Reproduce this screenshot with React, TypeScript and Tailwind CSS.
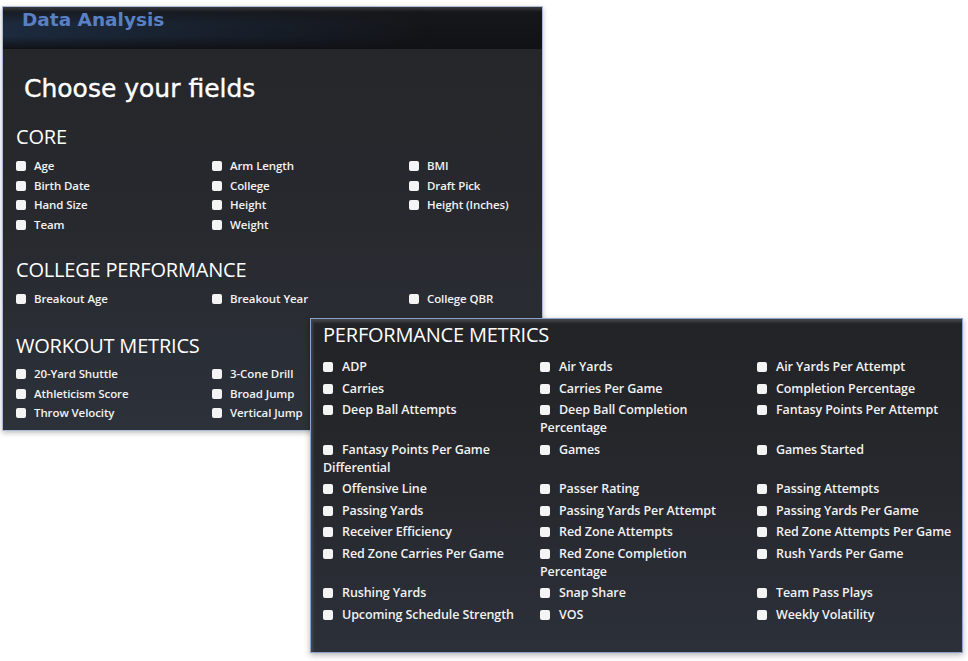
import React from "react";

const core = [
  "Age", "Arm Length", "BMI",
  "Birth Date", "College", "Draft Pick",
  "Hand Size", "Height", "Height (Inches)",
  "Team", "Weight",
];

const college = ["Breakout Age", "Breakout Year", "College QBR"];

// third column sits under the performance window, so it is left empty
const workout = [
  "20-Yard Shuttle", "3-Cone Drill", "",
  "Athleticism Score", "Broad Jump", "",
  "Throw Velocity", "Vertical Jump", "",
];

const performance = [
  "ADP", "Air Yards", "Air Yards Per Attempt",
  "Carries", "Carries Per Game", "Completion Percentage",
  "Deep Ball Attempts", "Deep Ball Completion Percentage", "Fantasy Points Per Attempt",
  "Fantasy Points Per Game Differential", "Games", "Games Started",
  "Offensive Line", "Passer Rating", "Passing Attempts",
  "Passing Yards", "Passing Yards Per Attempt", "Passing Yards Per Game",
  "Receiver Efficiency", "Red Zone Attempts", "Red Zone Attempts Per Game",
  "Red Zone Carries Per Game", "Red Zone Completion Percentage", "Rush Yards Per Game",
  "Rushing Yards", "Snap Share", "Team Pass Plays",
  "Upcoming Schedule Strength", "VOS", "Weekly Volatility",
];

const Box = ({ gap }: { gap: string }) => (
  <input
    type="checkbox"
    className={`appearance-none inline-block w-[10px] h-[10px] bg-[#f4f4f4] rounded-[2px] align-[-1px] ${gap}`}
  />
);

const SmallField = ({ label }: { label: string }) =>
  label ? (
    <label className="block text-[11.5px] leading-[17px] font-semibold text-[#f2f2f2] pr-[8px] tracking-[-0.1px]">
      <Box gap="mr-[8px]" />
      {label}
    </label>
  ) : (
    <div />
  );

const BigField = ({ label }: { label: string }) => (
  <label className="block text-[12.5px] leading-[18px] font-semibold text-[#f2f2f2] pr-[8px] tracking-[-0.1px]">
    <Box gap="mr-[9px]" />
    {label}
  </label>
);

const Heading = ({ children }: { children: React.ReactNode }) => (
  <h2 className="text-[20px] leading-[28px] text-white tracking-[-0.2px]">{children}</h2>
);

export default function App() {
  return (
    <div className="relative w-[968px] h-[661px] bg-white overflow-hidden font-['Open_Sans',sans-serif]">
      {/* back window */}
      <div className="absolute left-[2px] top-[6px] w-[541px] h-[425px] border border-[#a9bcd8] shadow-[0_2px_5px_rgba(0,0,0,0.25)] flex flex-col bg-gradient-to-b from-[#25262a] via-[#27292e] to-[#2c313a]">
        <div className="h-[42px] shrink-0 bg-[linear-gradient(180deg,#3a3b3e_0px,#16171a_5px,#111216_100%)] relative">
          <div className="absolute inset-0 bg-[linear-gradient(90deg,rgba(40,70,110,0.45),rgba(40,70,110,0.15)_55%,rgba(0,0,0,0)_80%)] [mask-image:linear-gradient(180deg,transparent_0%,black_40%,black_70%,transparent_100%)]" />
          <div className="relative pl-[19px] pt-[0px] text-[18.5px] leading-[26px] font-bold text-[#5a80c4] font-['DejaVu_Sans',sans-serif]">
            Data Analysis
          </div>
        </div>
        <div className="pl-[13px]">
          <h1 className="pl-[8px] pt-[25px] text-[25px] leading-[30px] text-white font-['DejaVu_Sans',sans-serif] [-webkit-text-stroke:0.4px_white]">
            Choose your fields
          </h1>
          <div className="mt-[19px]">
            <Heading>CORE</Heading>
          </div>
          <div className="mt-[6px] grid grid-cols-[196px_197px_1fr] gap-y-[2.7px]">
            {core.map((f) => (
              <SmallField key={f} label={f} />
            ))}
          </div>
          <div className="mt-[23px]">
            <Heading>COLLEGE PERFORMANCE</Heading>
          </div>
          <div className="mt-[6px] grid grid-cols-[196px_197px_1fr] gap-y-[2.7px]">
            {college.map((f) => (
              <SmallField key={f} label={f} />
            ))}
          </div>
          <div className="mt-[25px]">
            <Heading>WORKOUT METRICS</Heading>
          </div>
          <div className="mt-[5px] grid grid-cols-[196px_197px_1fr] gap-y-[2.7px]">
            {workout.map((f, i) => (
              <SmallField key={i} label={f} />
            ))}
          </div>
        </div>
      </div>

      {/* front window */}
      <div className="absolute left-[310px] top-[318px] w-[653px] h-[335px] border border-[#8aa3cb] shadow-[0_2px_6px_rgba(0,0,0,0.3),inset_2px_3px_3px_rgba(90,90,95,0.6)] bg-gradient-to-b from-[#222326] via-[#26282d] to-[#2c3039] pl-[12px]">
        <div className="pt-[2px]">
          <Heading>PERFORMANCE METRICS</Heading>
        </div>
        <div className="mt-[9px] grid grid-cols-[217px_217px_1fr] gap-y-[3.5px]">
          {performance.map((f) => (
            <BigField key={f} label={f} />
          ))}
        </div>
      </div>
    </div>
  );
}
